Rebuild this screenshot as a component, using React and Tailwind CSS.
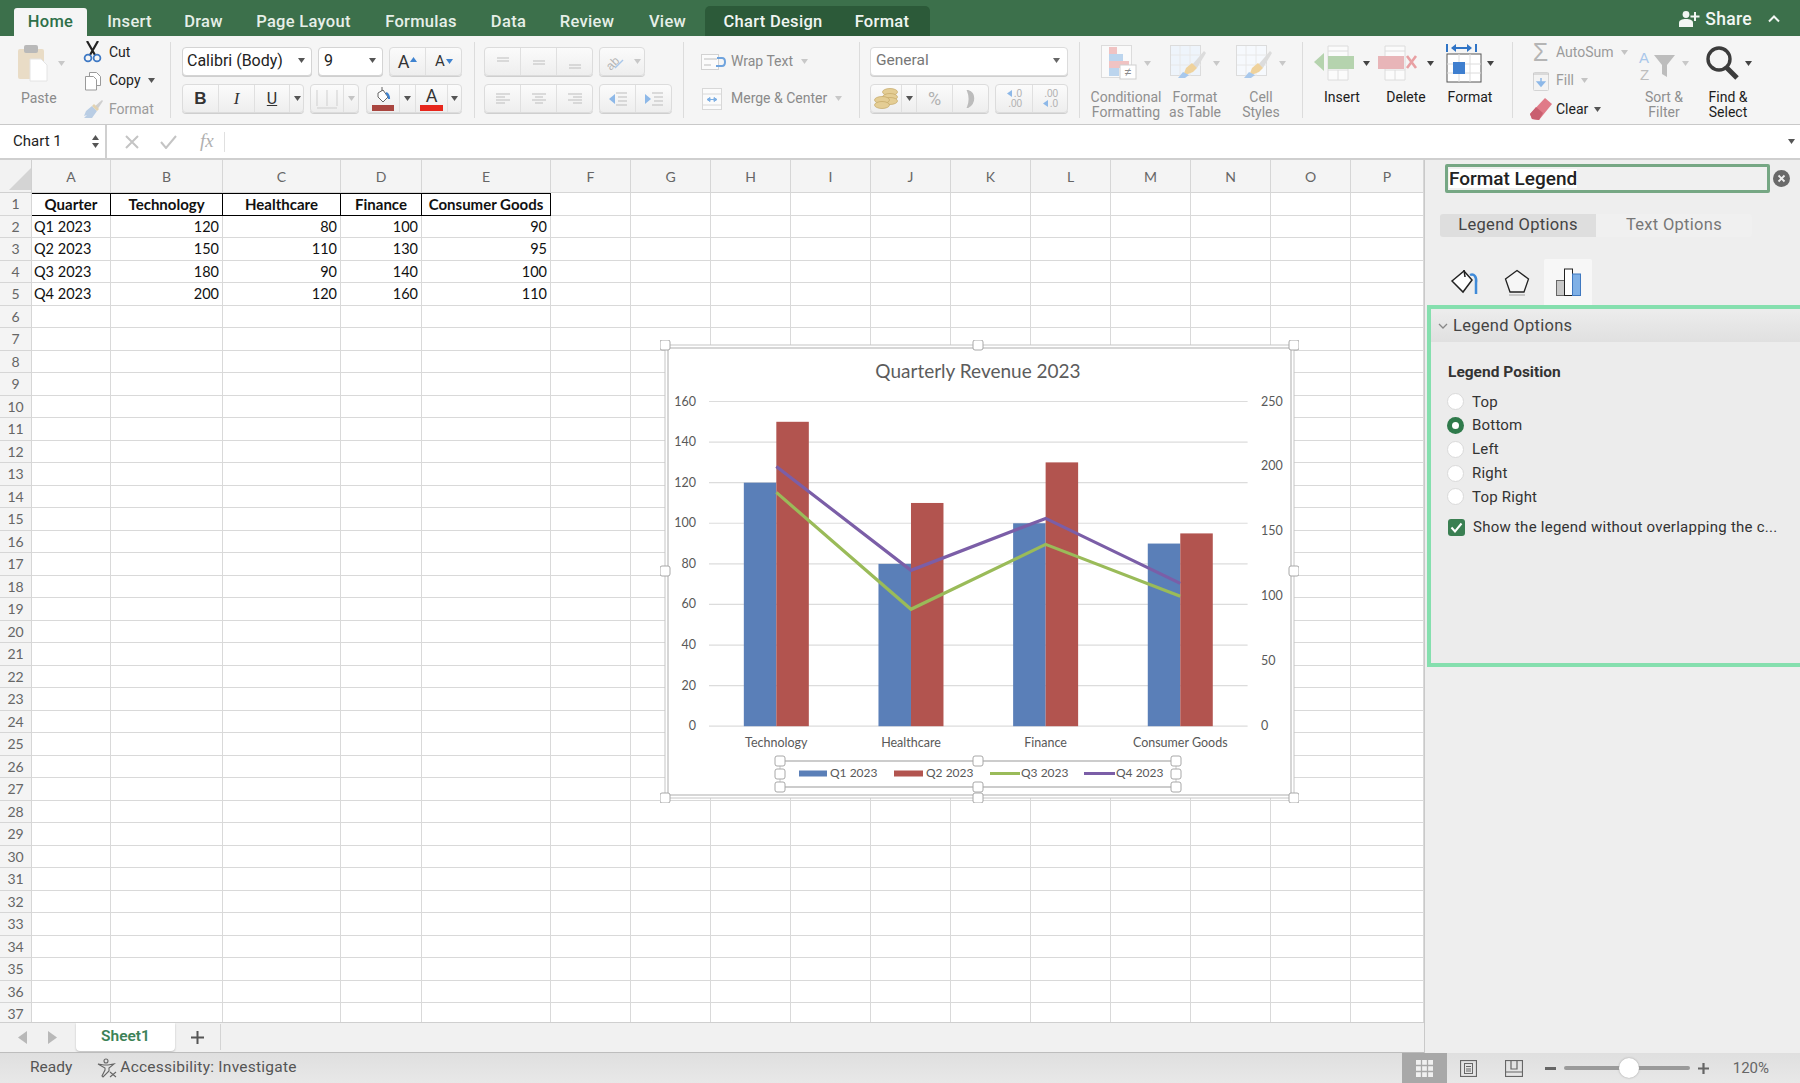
import React from "react";

const Caret = ({ c = "#666", className = "" }) => (
  <svg width="7" height="5" viewBox="0 0 7 5" className={className}><path d="M0 0h7L3.500 5z" fill={c} /></svg>
);

const Seg = ({ w, children }) => (
  <div style={{ width: w }} className="flex items-stretch h-[29px] rounded-[4px] border border-[#dcdcdc] bg-linear-to-b from-[#fbfbfb] to-[#eeeeee] shadow-[0_1px_0_#cfcfcf] overflow-hidden">
    {children}
  </div>
);
const Cell = ({ w, last, children }) => (
  <div style={{ width: w }} className={"flex items-center justify-center shrink-0 " + (last ? "" : "border-r border-[#e0e0e0]")}>{children}</div>
);
const Sep = () => <div className="w-px h-[76px] bg-[#dcdcdc] shrink-0" />;

const PasteIcon = () => (
  <svg width="30" height="37" viewBox="0 0 30 37">
    <rect x="0" y="4" width="26" height="30" rx="2" fill="#e9dcc6" />
    <rect x="6" y="0" width="14" height="8" rx="2" fill="#b9b9b9" />
    <path d="M12 14h11l6 6v16H12z" fill="#fff" stroke="#e4e4e4" />
  </svg>
);
const ScissorsIcon = () => (
  <svg width="20" height="22" viewBox="0 0 20 22">
    <path d="M4 0l8 14M15 0L7 14" stroke="#222" strokeWidth="2.200" />
    <circle cx="5" cy="17" r="3.400" fill="none" stroke="#3d78c4" strokeWidth="1.800" />
    <circle cx="14" cy="17" r="3.400" fill="none" stroke="#3d78c4" strokeWidth="1.800" />
  </svg>
);
const CopyIcon = () => (
  <svg width="18" height="20" viewBox="0 0 18 20" fill="#fff" stroke="#9a9a9a">
    <path d="M5.500 1.500h7l4 4v9h-11z" />
    <path d="M1.500 5.500h8l3 3v10.500h-11z" />
  </svg>
);
const BrushIcon = ({ w = 22, h = 20 }) => (
  <svg width={w} height={h} viewBox="0 0 22 20">
    <path d="M12 8L20 1l1 1-6 9z" fill="#cfcfcf" />
    <path d="M4 12l6-5 5 5-5 7H2l3-3-3 1z" fill="#b9cde4" />
    <path d="M10 7l5 5 2-2-5-5z" fill="#e2d2b0" />
  </svg>
);

const CondIcon = () => (
  <svg width="38" height="36" viewBox="0 0 38 36">
    <rect x="0.500" y="0.500" width="30" height="32" fill="#fafafa" stroke="#dcdcdc" />
    <rect x="8" y="2" width="8" height="7" fill="#f0c3c3" />
    <rect x="8" y="9" width="14" height="7" fill="#bcd5ee" />
    <rect x="8" y="16" width="20" height="7" fill="#f0c3c3" />
    <rect x="8" y="23" width="10" height="8" fill="#bcd5ee" />
    <rect x="19" y="20" width="16" height="14" fill="#fff" stroke="#cfcfcf" />
    <text x="27" y="31" textAnchor="middle" fontSize="12" fill="#8a8a8a" fontFamily="Liberation Sans, sans-serif">≠</text>
  </svg>
);
const TableIcon = ({ fill = "#eef4fb" }) => (
  <svg width="38" height="36" viewBox="0 0 38 36">
    <rect x="0.500" y="0.500" width="30" height="30" fill={fill} stroke="#dcdcdc" />
    <path d="M10 1v30M20 1v30M1 10h30M1 20h30" stroke="#e8e8e8" />
    <path d="M22 20L34 6l2 2-9 15z" fill="#dcdcdc" />
    <path d="M16 23l6-5 5 5-4 4-10 4z" fill="#efd29c" />
    <path d="M13 27l6 3-4 3H8z" fill="#a8c8ec" />
  </svg>
);
const InsertIcon = () => (
  <svg width="44" height="36" viewBox="0 0 44 36">
    <path d="M14 1h20v34H14z" fill="#fbfbfb" stroke="#dcdcdc" />
    <path d="M14 25h20M24 25v10M14 6h20" stroke="#dcdcdc" />
    <rect x="14" y="11" width="26" height="13" fill="#b5d3ae" />
    <path d="M0 17l10-9v18z" fill="#b5d3ae" />
  </svg>
);
const DeleteIcon = () => (
  <svg width="44" height="36" viewBox="0 0 44 36">
    <path d="M7 1h20v34H7z" fill="#fbfbfb" stroke="#dcdcdc" />
    <path d="M7 25h20M17 25v10M7 6h20" stroke="#dcdcdc" />
    <rect x="0" y="11" width="26" height="13" fill="#e8b5b8" />
    <path d="M29 11l9 12M38 11l-9 12" stroke="#e8a0a3" strokeWidth="2.600" />
  </svg>
);
const FormatIcon = () => (
  <svg width="36" height="40" viewBox="0 0 36 40">
    <path d="M1 1v8M30 1v8" stroke="#2f74c6" strokeWidth="2" />
    <path d="M6 5h19" stroke="#2f74c6" strokeWidth="2" />
    <path d="M10 1L5 5l5 4zM21 1l5 4-5 4z" fill="#2f74c6" />
    <rect x="1" y="11" width="34" height="28" fill="#fff" stroke="#555" />
    <path d="M13 11v28M24 11v28M1 21h34M1 30h34" stroke="#dcdcdc" />
    <rect x="7" y="19" width="12" height="12" fill="#3f7fcf" />
  </svg>
);
const SortIcon = () => (
  <svg width="38" height="36" viewBox="0 0 38 36" fontFamily="Liberation Sans, sans-serif" overflow="visible">
    <text x="0" y="18" fontSize="15" fill="#a9c7ea">A</text>
    <text x="1" y="35" fontSize="15" fill="#bdbdbd">Z</text>
    <path d="M15 10h21l-8 10v12l-5-3V20z" fill="#bdbdbd" />
  </svg>
);
const SearchIcon = () => (
  <svg width="35" height="37" viewBox="0 0 35 37" fill="none" stroke="#3c3c3c">
    <circle cx="14" cy="14" r="11" strokeWidth="3.400" />
    <path d="M22 23l10 10" strokeWidth="5" />
  </svg>
);
const EraserIcon = () => (
  <svg width="22" height="24" viewBox="0 0 22 24">
    <path d="M15 1l7 6L9 23l-7-1-2-5z" fill="#e07a88" />
    <path d="M6 10l7 6-4 7-7-1-2-5z" fill="#c95f70" />
  </svg>
);
const SmallAlign = ({ d, c = "#bdbdbd", w = 18, h = 16 }) => (
  <svg width={w} height={h} viewBox="0 0 18 16"><path d={d} stroke={c} strokeWidth="1.200" fill="none" /></svg>
);
const IndentIcon = ({ right }) => (
  <svg width="20" height="16" viewBox="0 0 20 16">
    <path d={right ? "M1 3l6 5-6 5z" : "M7 3L1 8l6 5z"} fill="#8db8e8" />
    <path d="M8 2h11M10 6h9M10 10h9M8 14h11" stroke="#bdbdbd" />
  </svg>
);

const Small = ({ icon, label, faded, arrow, w = 90, gap = "ml-[4px]" }) => (
  <div style={{ width: w }} className="flex items-center h-[20px]">
    <div className="w-[25px] flex justify-center shrink-0">{icon}</div>
    <span className={gap + " text-[14px] " + (faded ? "text-[#9b9b9b]" : "text-[#222]")}>{label}</span>
    {arrow && <Caret c={faded ? "#c4c4c4" : "#555"} className="ml-[7px]" />}
  </div>
);

const Tall = ({ w, icon, label, faded, arrow, className = "" }) => (
  <div style={{ width: w }} className={"flex flex-col items-center shrink-0 " + className}>
    <div className="flex items-center gap-[5px] h-[42px] pt-[0px]">
      {icon}
      {arrow && <Caret c={faded ? "#c8c8c8" : "#444"} />}
    </div>
    <div className={"text-center text-[14px] leading-[15px] mt-[6px] whitespace-pre " + (faded ? "text-[#8f8f8f]" : "text-[#1c1c1c]")}>{label}</div>
  </div>
);

const TABS = [
  ["Home", "w-[73px] ml-[14px]"], ["Insert", "w-[85px]"], ["Draw", "w-[63px]"], ["Page Layout", "w-[130px] ml-[3.500px]"],
  ["Formulas", "w-[105px]"], ["Data", "w-[68px] ml-[1px]"], ["Review", "w-[89px]"], ["View", "w-[72px]"],
];

const TopBar = () => (
  <div className="h-[36px] bg-[#3c704b] flex items-end shrink-0 text-[16.500px] tracking-[0.3px] font-medium">
    {TABS.map(([t, c], i) => (
      <div key={t} className={c + " h-[28px] flex items-center justify-center rounded-t-[3px] " + (i === 0 ? "bg-[#f5f5f5] text-[#2e7049]" : "text-[#e6efe8]")}>{t}</div>
    ))}
    <div className="ml-[1.500px] w-[225px] h-[30px] bg-[#2c5a39] rounded-t-[5px] flex items-center text-[#f0f5f1] pt-[2px]">
      <span className="w-[136px] text-center">Chart Design</span>
      <span className="w-[82px] text-center">Format</span>
    </div>
    <div className="ml-auto h-[36px] flex items-center text-[#f2f6f3] pr-[20px] pt-[2px]">
      <svg width="22" height="18" viewBox="0 0 22 18" fill="#f2f6f3">
        <circle cx="7" cy="4.500" r="3.400" />
        <path d="M0 17v-4c0-3 3-4 7-4s7 1 7 4v4z" />
        <path d="M16 5v9M11.500 9.500h9" stroke="#f2f6f3" strokeWidth="2" transform="translate(0 -3)" />
      </svg>
      <span className="ml-[4px] text-[17.500px]">Share</span>
      <svg width="12" height="8" viewBox="0 0 12 8" className="ml-[16px]"><path d="M1 6.500l5-5 5 5" stroke="#f2f6f3" strokeWidth="2" fill="none" /></svg>
    </div>
  </div>
);

const Ribbon = () => (
  <div className="h-[89px] shrink-0 bg-[#f5f5f5] border-b border-[#c9c9c9] pt-[6px] flex items-start">
    {/* Clipboard */}
    <div className="w-[170px] flex shrink-0">
      <div className="w-[82px] pl-[18px] pt-[3px]">
        <div className="flex items-center gap-[10px]"><PasteIcon /><Caret c="#c8c8c8" /></div>
        <div className="text-[14px] text-[#8a8a8a] mt-[9px] ml-[3px] leading-[15px]">Paste</div>
      </div>
      <div className="flex flex-col gap-[8.500px] ml-[-1px]">
        <Small icon={<ScissorsIcon />} label="Cut" />
        <Small icon={<CopyIcon />} label="Copy" arrow />
        <Small icon={<BrushIcon />} label="Format" faded />
      </div>
    </div>
    <Sep />
    {/* Font */}
    <div className="w-[303px] shrink-0 pl-[11px] pt-[5px] flex flex-col gap-[8px]">
      <div className="flex gap-[6px]">
        <div className="w-[130px] h-[29px] bg-white rounded-[4px] border border-[#d4d4d4] shadow-[0_1px_0_#cfcfcf] flex items-center pl-[4px] pr-[6px] pb-[2px] text-[16px] text-[#222]">
          <span>Calibri (Body)</span><Caret c="#555" className="ml-auto" />
        </div>
        <div className="w-[65px] h-[29px] bg-white rounded-[4px] border border-[#d4d4d4] shadow-[0_1px_0_#cfcfcf] flex items-center pl-[5px] pr-[6px] pb-[2px] text-[16px] text-[#222]">
          <span>9</span><Caret c="#555" className="ml-auto" />
        </div>
        <Seg w={73}>
          <Cell w={36}><span className="text-[18px] text-[#333]">A</span><Caret c="#3f83d0" className="rotate-180 mb-[5px] ml-[1px]" /></Cell>
          <Cell w={36} last><span className="text-[15px] text-[#333]">A</span><Caret c="#3f83d0" className="ml-[1px]" /></Cell>
        </Seg>
      </div>
      <div className="flex">
        <Seg w={122}>
          <Cell w={36}><span className="font-bold text-[17px] text-[#333] font-['Liberation_Sans',sans-serif]">B</span></Cell>
          <Cell w={36}><span className="italic text-[17px] text-[#333] font-['Liberation_Serif',serif]">I</span></Cell>
          <Cell w={35}><span className="underline text-[16px] text-[#333]">U</span></Cell>
          <Cell w={15} last><Caret c="#555" /></Cell>
        </Seg>
        <div className="ml-[6px]">
          <Seg w={49}>
            <Cell w={33}><svg width="22" height="22" viewBox="0 0 22 22"><path d="M1 2v16M21 2v16M11 2v16M1 20h20" stroke="#cfcfcf" /></svg></Cell>
            <Cell w={14} last><Caret c="#c4c4c4" /></Cell>
          </Seg>
        </div>
        <div className="ml-[7px]">
          <Seg w={96}>
            <Cell w={33}>
              <svg width="24" height="25" viewBox="0 0 24 25">
                <path d="M11 1v4M7 7l5-3 5 7-5 5-5-5z" fill="#fff" stroke="#666" />
                <path d="M15 7c2 1 3 3 3 6" stroke="#3f83d0" strokeWidth="2.200" fill="none" />
                <rect x="1" y="19" width="22" height="6" fill="#a9453f" />
              </svg>
            </Cell>
            <Cell w={16}><Caret c="#555" /></Cell>
            <Cell w={32}>
              <div className="flex flex-col items-center">
                <span className="text-[18px] leading-[19px] text-[#333]">A</span>
                <div className="w-[23px] h-[6px] bg-[#e7261c]" />
              </div>
            </Cell>
            <Cell w={13} last><Caret c="#555" /></Cell>
          </Seg>
        </div>
      </div>
    </div>
    <Sep />
    {/* Alignment */}
    <div className="w-[208px] shrink-0 pl-[9px] pt-[5px] flex flex-col gap-[8px]">
      <div className="flex gap-[6px]">
        <Seg w={109}>
          <Cell w={36}><SmallAlign d="M3 4h12M3 7h12" /></Cell>
          <Cell w={36}><SmallAlign d="M3 7h12M3 10h12" /></Cell>
          <Cell w={35} last><SmallAlign d="M3 11h12M3 14h12" /></Cell>
        </Seg>
        <Seg w={46}>
          <Cell w={30} last>
            <svg width="22" height="20" viewBox="0 0 22 20" fontFamily="Liberation Sans, sans-serif">
              <text x="8" y="14" fontSize="12" fill="#b5b5b5" transform="rotate(-45 10 10)" textAnchor="middle">ab</text>
              <path d="M11 16l8-8" stroke="#a9c7ea" strokeWidth="1.500" />
            </svg>
          </Cell>
          <Cell w={14} last><Caret c="#c8c8c8" /></Cell>
        </Seg>
      </div>
      <div className="flex gap-[6px]">
        <Seg w={109}>
          <Cell w={36}><SmallAlign d="M2 3h14M2 6h9M2 9h14M2 12h9" /></Cell>
          <Cell w={36}><SmallAlign d="M2 3h14M5 6h8M2 9h14M5 12h8" /></Cell>
          <Cell w={35} last><SmallAlign d="M2 3h14M7 6h9M2 9h14M7 12h9" /></Cell>
        </Seg>
        <Seg w={73}>
          <Cell w={36}><IndentIcon /></Cell>
          <Cell w={35} last><IndentIcon right /></Cell>
        </Seg>
      </div>
    </div>
    <Sep />
    {/* Wrap */}
    <div className="w-[175px] shrink-0 pl-[17px] pt-[5px] flex flex-col gap-[8px] text-[14px] text-[#8a8a8a]">
      <div className="h-[29px] flex items-center">
        <svg width="26" height="18" viewBox="0 0 26 18" fill="none">
          <rect x="0.500" y="1.500" width="17" height="15" stroke="#d2d2d2" fill="#fbfbfb" />
          <path d="M3 6h13M3 12h7" stroke="#bdbdbd" />
          <path d="M16 5h5c4 0 4 8 0 8h-6" stroke="#6fa3dd" strokeWidth="2" />
        </svg>
        <span className="ml-[4px]">Wrap Text</span><Caret c="#c8c8c8" className="ml-[8px]" />
      </div>
      <div className="h-[29px] flex items-center">
        <svg width="24" height="24" viewBox="0 0 24 24">
          <rect x="1.500" y="1.500" width="19" height="21" fill="#fbfbfb" stroke="#d8d8d8" />
          <path d="M1 7h20M1 18h20" stroke="#d8d8d8" />
          <path d="M6 12.500h10M6 12.500l3-2v4zM16 12.500l-3-2v4z" stroke="#7fb0e4" fill="#7fb0e4" />
        </svg>
        <span className="ml-[6px]">Merge &amp; Center</span><Caret c="#c8c8c8" className="ml-[8px]" />
      </div>
    </div>
    <Sep />
    {/* Number */}
    <div className="w-[219px] shrink-0 pl-[10px] pt-[5px] flex flex-col gap-[8px]">
      <div className="w-[198px] h-[29px] bg-white rounded-[4px] border border-[#dcdcdc] shadow-[0_1px_0_#cfcfcf] flex items-center pl-[5px] pr-[7px] pb-[2px] text-[15.500px] text-[#777]">
        <span>General</span><Caret c="#666" className="ml-auto" />
      </div>
      <div className="flex gap-[6px]">
        <Seg w={119}>
          <Cell w={31}>
            <svg width="26" height="24" viewBox="0 0 26 24" fill="#e4cd94" stroke="#c4a866" strokeWidth="0.700">
              <ellipse cx="17" cy="5" rx="7.500" ry="3.500" /><ellipse cx="17" cy="10" rx="7.500" ry="3.500" /><ellipse cx="17" cy="14" rx="7.500" ry="3.500" />
              <ellipse cx="9" cy="13" rx="7.500" ry="3.500" /><ellipse cx="9" cy="18" rx="7.500" ry="3.500" />
            </svg>
          </Cell>
          <Cell w={15}><Caret c="#555" /></Cell>
          <Cell w={36}><span className="text-[18px] text-[#b0b0b0]">%</span></Cell>
          <Cell w={35} last>
            <svg width="12" height="18" viewBox="0 0 12 18"><path d="M3 1c7 2 7 12 0 16 2-5 2-11 0-16z" fill="#bcbcbc" stroke="#bcbcbc" strokeWidth="2" /></svg>
          </Cell>
        </Seg>
        <Seg w={73}>
          <Cell w={37}>
            <div className="flex flex-col items-end text-[10px] leading-[10px] text-[#b0b0b0] font-['Liberation_Sans',sans-serif]">
              <div className="flex items-center"><Caret c="#8db8e8" className="rotate-90 mr-[1px]" /><span>.0</span></div><span>.00</span>
            </div>
          </Cell>
          <Cell w={34} last>
            <div className="flex flex-col items-end text-[10px] leading-[10px] text-[#b0b0b0] font-['Liberation_Sans',sans-serif]">
              <span>.00</span><div className="flex items-center"><Caret c="#8db8e8" className="rotate-90 mr-[1px]" /><span>.0</span></div>
            </div>
          </Cell>
        </Seg>
      </div>
    </div>
    <Sep />
    {/* Styles */}
    <div className="w-[222px] shrink-0 pl-[6px] flex">
      <Tall w={80} icon={<CondIcon />} label={"Conditional\nFormatting"} faded arrow />
      <Tall w={58} icon={<TableIcon />} label={"Format\nas Table"} faded arrow />
      <Tall w={66} className="ml-[4px]" icon={<TableIcon fill="#f6f9fd" />} label={"Cell\nStyles"} faded arrow />
    </div>
    <Sep />
    {/* Cells */}
    <div className="w-[209px] shrink-0 pl-[7px] flex">
      <Tall w={64} icon={<InsertIcon />} label="Insert" arrow />
      <Tall w={64} icon={<DeleteIcon />} label="Delete" arrow />
      <Tall w={64} icon={<FormatIcon />} label="Format" arrow />
    </div>
    <Sep />
    {/* Editing */}
    <div className="flex-1 pl-[15px] flex">
      <div className="w-[104px] shrink-0 flex flex-col gap-[8.500px]">
        <Small w={104} faded arrow gap="ml-[3px]" label="AutoSum" icon={<span className="text-[25px] leading-[20px] text-[#b5b5b5] font-['Liberation_Sans',sans-serif]">Σ</span>} />
        <Small w={104} faded arrow gap="ml-[3px]" label="Fill" icon={
          <svg width="16" height="20" viewBox="0 0 16 20"><rect x="0.500" y="1.500" width="15" height="18" rx="1" fill="#f3f3f3" stroke="#d4d4d4" /><path d="M0 3h16" stroke="#c0c0c0" /><path d="M8 7v6M4.500 11l3.500 4 3.500-4z" stroke="#8db8e8" fill="#8db8e8" strokeWidth="1.500" /></svg>
        } />
        <div className="flex items-center h-[20px] w-[104px]">
          <div className="w-[25px] flex justify-center shrink-0"><EraserIcon /></div>
          <span className="ml-[3px] text-[14px] text-[#222]">Clear</span><Caret c="#555" className="ml-[6px]" />
        </div>
      </div>
      <Tall w={64} icon={<SortIcon />} label={"Sort &\nFilter"} faded arrow />
      <Tall w={64} icon={<SearchIcon />} label={"Find &\nSelect"} arrow />
    </div>
  </div>
);

const FormulaBar = () => (
  <div className="h-[35px] shrink-0 bg-white border-b-2 border-[#cfcfcf] flex items-center">
    <div className="w-[107px] h-full bg-white border-r-2 border-[#d0d0d0] flex items-center pl-[13px] pr-[6px] text-[15px] text-[#222]">
      <span>Chart 1</span>
      <div className="ml-auto flex flex-col gap-[3px]"><Caret c="#555" className="rotate-180" /><Caret c="#555" /></div>
    </div>
    <svg width="14" height="14" viewBox="0 0 14 14" className="ml-[18px]"><path d="M1 1l12 12M13 1L1 13" stroke="#c4c4c4" strokeWidth="2" /></svg>
    <svg width="17" height="14" viewBox="0 0 17 14" className="ml-[21px]"><path d="M1 7l5 6L16 1" stroke="#c4c4c4" strokeWidth="2" fill="none" /></svg>
    <span className="ml-[23px] italic text-[19px] text-[#b0b0b0] font-['Liberation_Serif',serif]">fx</span>
    <div className="w-px h-[20px] bg-[#e0e0e0] ml-[10px]" />
    <Caret c="#555" className="ml-auto mr-[5px]" />
  </div>
);

const COLS = ["A", "B", "C", "D", "E", "F", "G", "H", "I", "J", "K", "L", "M", "N", "O", "P"];
const DATA = [
  ["Quarter", "Technology", "Healthcare", "Finance", "Consumer Goods"],
  ["Q1 2023", 120, 80, 100, 90],
  ["Q2 2023", 150, 110, 130, 95],
  ["Q3 2023", 180, 90, 140, 100],
  ["Q4 2023", 200, 120, 160, 110],
];
const ROWS = Array.from({ length: 37 }, (_, i) => i + 1);

const Sheet = () => (
  <div className="grid grid-cols-[32px_79px_112px_118px_81px_129px_repeat(10,80px)_73px] grid-rows-[33px_repeat(37,22.500px)] bg-white font-['Lato',sans-serif] text-[14.500px] text-[#111]">
    <div className="bg-[#f2f2f2] border-r border-b border-[#d0d0d0] flex items-end justify-end">
      <svg width="22" height="24" viewBox="0 0 22 24"><path d="M22 0v22H0z" fill="#d4d4d4" /></svg>
    </div>
    {COLS.map((c) => (
      <div key={c} className="bg-[#f4f4f4] border-r border-b border-[#d6d6d6] flex items-center justify-center text-[#666] text-[14px]">{c}</div>
    ))}
    {ROWS.map((r) => (
      <React.Fragment key={r}>
        <div className="bg-[#f4f4f4] border-r border-b border-[#d6d6d6] flex items-center justify-center text-[#666] text-[14px] leading-none pt-[1px]">{r}</div>
        {COLS.map((c, ci) => {
          const v = r <= 5 && ci < 5 ? DATA[r - 1][ci] : null;
          if (r === 1 && ci < 5) {
            return <div key={c} className="border-r border-b border-t border-black flex items-center justify-center font-bold text-[15px] whitespace-nowrap leading-none pt-[1px]">{v}</div>;
          }
          return (
            <div key={c} className={"border-r border-b border-[#d9d9d9] flex items-center leading-none whitespace-nowrap pt-[1px] " + (typeof v === "number" ? "justify-end pr-[3px]" : "pl-[2px]")}>{v}</div>
          );
        })}
      </React.Fragment>
    ))}
  </div>
);

/* Chart: drawing coordinates relative to the selection frame (629 × 453) */
const PW = 538.6, PX = 44, Y0 = 381.2, PH = 324.7;
const cats = ["Technology", "Healthcare", "Finance", "Consumer Goods"];
const q1 = [120, 80, 100, 90], q2 = [150, 110, 130, 95], q3 = [180, 90, 140, 100], q4 = [200, 120, 160, 110];
const cx = (i) => PX + PW / 4 * (i + 0.5);
const yP = (v) => Y0 - (v * PH) / 160;
const yS = (v) => Y0 - (v * PH) / 250;
const line = (a) => a.map((v, i) => `${cx(i)},${yS(v)}`).join(" ");

const Handle = ({ x, y, s = 10 }) => (
  <rect x={x - s / 2} y={y - s / 2} width={s} height={s} rx="2" fill="#fff" stroke="#a8a8a8" strokeWidth="1" />
);

const Chart = () => (
  <div className="absolute left-[660px] top-[180px] w-[639px] h-[463px]">
    <svg width="639" height="463" viewBox="-5 -5 639 463" fontFamily="Lato, sans-serif">
      <rect x="0" y="0" width="629" height="453" fill="#fff" stroke="#c6c6c6" strokeWidth="1" />
      <rect x="3" y="3" width="623" height="447" fill="#fff" stroke="#c9c9c9" strokeWidth="1.500" />
      <text x="313" y="33" textAnchor="middle" fontSize="19" fill="#5c5c5c">Quarterly Revenue 2023</text>
      {[0, 20, 40, 60, 80, 100, 120, 140, 160].map((v) => (
        <g key={v}>
          <path d={`M${PX} ${yP(v)}H${PX + PW}`} stroke="#dcdcdc" strokeWidth="1.200" />
          <text x="31" y={yP(v) + 4} textAnchor="end" fontSize="12.500" fill="#595959">{v}</text>
        </g>
      ))}
      {[0, 50, 100, 150, 200, 250].map((v) => (
        <text key={v} x="596" y={yS(v) + 4} fontSize="12.500" fill="#595959">{v}</text>
      ))}
      {cats.map((c, i) => (
        <g key={c}>
          <rect x={cx(i) - 32.500} y={yP(q1[i])} width="32.500" height={(q1[i] * PH) / 160} fill="#5a7fb8" />
          <rect x={cx(i)} y={yP(q2[i])} width="32.500" height={(q2[i] * PH) / 160} fill="#b2544f" />
          <text x={cx(i)} y="402" textAnchor="middle" fontSize="12.500" fill="#595959">{c}</text>
        </g>
      ))}
      <polyline points={line(q3)} fill="none" stroke="#9abb59" strokeWidth="3.200" />
      <polyline points={line(q4)} fill="none" stroke="#7b5ea7" strokeWidth="3.200" />
      {/* Legend selection */}
      <path d="M115 416H511M115 442H511" stroke="#9a9a9a" strokeWidth="1.200" />
      <path d="M115 416V442M511 416V442" stroke="#c8c8c8" strokeWidth="1" />
      {[115, 313, 511].map((x) => <Handle key={x} x={x} y={416} />)}
      {[115, 511].map((x) => <Handle key={x} x={x} y={429} />)}
      {[115, 313, 511].map((x) => <Handle key={x} x={x} y={442} />)}
      <rect x="134" y="425.500" width="28" height="6" fill="#5a7fb8" />
      <text x="165" y="432" fontSize="12" fill="#595959">Q1 2023</text>
      <rect x="229" y="425.500" width="29" height="6" fill="#b2544f" />
      <text x="261" y="432" fontSize="12" fill="#595959">Q2 2023</text>
      <path d="M325 428.500H355" stroke="#9abb59" strokeWidth="3" />
      <text x="356" y="432" fontSize="12" fill="#595959">Q3 2023</text>
      <path d="M419 428.500H450" stroke="#7b5ea7" strokeWidth="3" />
      <text x="451" y="432" fontSize="12" fill="#595959">Q4 2023</text>
      {/* Chart selection handles */}
      {[[0, 0], [313, 0], [629, 0], [0, 226], [629, 226], [0, 453], [313, 453], [629, 453]].map(([x, y]) => (
        <Handle key={x + "-" + y} x={x} y={y} />
      ))}
    </svg>
  </div>
);

const TabBar = () => (
  <div className="h-[31px] shrink-0 bg-[#f1f1f1] border-t border-[#cfcfcf] border-b border-b-[#bdbdbd] flex items-start">
    <div className="w-[76px] h-full flex items-center pl-[18px] gap-[19px] shrink-0">
      <svg width="10" height="13" viewBox="0 0 10 13"><path d="M9 0v13L0 6.500z" fill="#b8b8b8" /></svg>
      <svg width="10" height="13" viewBox="0 0 10 13"><path d="M1 0v13l9-6.500z" fill="#b8b8b8" /></svg>
    </div>
    <div className="w-[99px] h-[28px] bg-white rounded-b-[4px] shadow-[0_1px_2px_#bbbbbb] flex items-center justify-center font-semibold text-[15.500px] text-[#3c8257] shrink-0">Sheet1</div>
    <div className="w-[46px] h-[26px] mt-[1px] border-r border-[#d4d4d4] flex items-center justify-center shrink-0">
      <svg width="13" height="13" viewBox="0 0 13 13"><path d="M6.500 0v13M0 6.500h13" stroke="#555" strokeWidth="2" /></svg>
    </div>
  </div>
);

const Radio = ({ label, on }) => (
  <div className="h-[23.750px] flex items-center -ml-[1px]">
    {on ? (
      <div className="w-[17px] h-[17px] rounded-full bg-[#2f7a4b] flex items-center justify-center shrink-0"><div className="w-[7px] h-[7px] rounded-full bg-white" /></div>
    ) : (
      <div className="w-[17px] h-[17px] rounded-full bg-white border border-[#dadada] shrink-0" />
    )}
    <span className="ml-[8px] text-[15px] text-[#333] tracking-[0.2px]">{label}</span>
  </div>
);

const Panel = () => (
  <div className="w-[376px] shrink-0 bg-[#eeeeee] border-l border-[#c9c9c9] flex flex-col">
    <div className="pl-[20px] pt-[4px] flex items-center">
      <div className="w-[325px] h-[29px] border-[3px] border-[#76a784] rounded-[2px] bg-[#f0f0f0] flex items-center pl-[1px] text-[19px] font-medium text-[#222] leading-none">
        <span className="bg-white">Format Legend</span>
      </div>
      <svg width="17" height="17" viewBox="0 0 17 17" className="ml-[3px]">
        <circle cx="8.500" cy="8.500" r="8.500" fill="#6a6a6a" />
        <path d="M5.500 5.500l6 6M11.500 5.500l-6 6" stroke="#eee" strokeWidth="1.800" />
      </svg>
    </div>
    <div className="ml-[15px] mt-[21px] w-[312px] h-[23px] flex text-[16.500px] tracking-[0.3px] rounded-[3px] overflow-hidden">
      <div className="w-[156px] bg-[#dedede] flex items-center justify-center text-[#444]">Legend Options</div>
      <div className="w-[156px] bg-[#f0f0f0] flex items-center justify-center text-[#777]">Text Options</div>
    </div>
    <div className="flex ml-[26px] mt-[22px] h-[46px] items-center">
      <svg width="28" height="26" viewBox="0 0 28 26" fill="none">
        <path d="M1 12L13 2l8 9-9 12z" fill="#fff" stroke="#222" strokeWidth="1.500" />
        <path d="M13 1l1 7" stroke="#222" strokeWidth="1.500" />
        <path d="M19 6c4-2 7 2 6 8v11" stroke="#3f8ad8" strokeWidth="2.500" />
      </svg>
      <svg width="26" height="27" viewBox="0 0 26 27" fill="none" className="ml-[25px]">
        <path d="M13 1.500L24.500 10l-4.500 13H6L1.500 10z" stroke="#222" strokeWidth="1.300" fill="#f6f6f6" />
        <path d="M5 26h16" stroke="#bbb" strokeWidth="1.500" />
      </svg>
      <div className="ml-[14px] w-[48px] h-[46px] bg-[#f7f7f7] rounded-t-[2px] flex items-center justify-center">
        <svg width="25" height="28" viewBox="0 0 25 28">
          <rect x="0.500" y="12.500" width="8" height="15" fill="#c8c8c8" stroke="#666" />
          <rect x="8.500" y="1" width="8" height="26.500" fill="#fff" stroke="#222" />
          <rect x="16.500" y="6" width="8" height="21.500" fill="#7fb0e6" stroke="#3f78c0" />
        </svg>
      </div>
    </div>
    <div className="ml-[2px] h-[362px] border-[4px] border-r-0 border-[#85dfae] bg-[#ececec] flex flex-col">
      <div className="mt-[2px] h-[31px] bg-linear-to-b from-[#ececec] to-[#e0e0e0] flex items-center pl-[7px] text-[16.500px] tracking-[0.3px] text-[#444]">
        <svg width="10" height="7" viewBox="0 0 10 7"><path d="M1 1l4 4 4-4" stroke="#888" strokeWidth="1.300" fill="none" /></svg>
        <span className="ml-[5px]">Legend Options</span>
      </div>
      <div className="pl-[17px] pt-[21px]">
        <div className="text-[15.500px] font-bold text-[#333] leading-[18px]">Legend Position</div>
        <div className="mt-[9px] flex flex-col">
          <Radio label="Top" />
          <Radio label="Bottom" on />
          <Radio label="Left" />
          <Radio label="Right" />
          <Radio label="Top Right" />
        </div>
        <div className="mt-[7px] flex items-center">
          <div className="w-[17px] h-[17px] rounded-[3px] bg-[#3a7f52] flex items-center justify-center shrink-0">
            <svg width="13" height="11" viewBox="0 0 13 11"><path d="M1.500 5.500l3.500 4 6.500-8" stroke="#fff" strokeWidth="2" fill="none" /></svg>
          </div>
          <span className="ml-[8px] text-[15px] text-[#333] tracking-[0.25px] whitespace-nowrap">Show the legend without overlapping the c...</span>
        </div>
      </div>
    </div>
  </div>
);

const StatusBar = () => (
  <div className="h-[30px] shrink-0 bg-linear-to-b from-[#dfdfdf] to-[#e8e8e8] flex items-center text-[15px] text-[#555]">
    <span className="ml-[30px] text-[15.500px]">Ready</span>
    <svg width="20" height="20" viewBox="0 0 20 20" fill="none" stroke="#666" strokeWidth="1.100" className="ml-[25px]">
      <circle cx="9" cy="3" r="2" />
      <path d="M1 6l6 1h4l6-1-5 4v3l-6 6-1-1 3-6V10z" />
      <path d="M13 14l6 5M19 14l-6 5" />
    </svg>
    <span className="ml-[3px] text-[15.500px] tracking-[0.25px]">Accessibility: Investigate</span>
    <div className="ml-auto h-full flex items-center">
      <div className="w-[45px] h-full bg-[#a8a8a8] flex items-center justify-center">
        <svg width="17" height="17" viewBox="0 0 17 17"><path d="M0 0h17v17H0z" fill="#f0f0f0" /><path d="M5.500 0v17M11.500 0v17M0 5.500h17M0 11.500h17" stroke="#a8a8a8" strokeWidth="1.300" /></svg>
      </div>
      <div className="w-[44px] flex justify-center">
        <svg width="17" height="17" viewBox="0 0 17 17" fill="none" stroke="#666"><rect x="0.500" y="0.500" width="16" height="16" strokeWidth="1.200" /><rect x="4.500" y="3.500" width="8" height="10" /><path d="M6 6.500h5M6 9h5M6 11h5" /></svg>
      </div>
      <div className="w-[46px] flex justify-center">
        <svg width="18" height="17" viewBox="0 0 18 17" fill="none" stroke="#666" strokeWidth="1.200"><rect x="0.500" y="0.500" width="17" height="16" /><path d="M6 0v9h6V0M0 12h18" /></svg>
      </div>
      <svg width="11" height="3" viewBox="0 0 11 3" className="ml-[8px]"><rect width="11" height="3" fill="#666" /></svg>
      <div className="ml-[8px] w-[126px] h-[4px] rounded-full bg-[#9a9a9a] flex items-center">
        <div className="ml-[55px] w-[20px] h-[20px] rounded-full bg-white shadow-[0_0_2px_#999999]" />
      </div>
      <svg width="11" height="11" viewBox="0 0 11 11" className="ml-[8px]"><path d="M5.500 0v11M0 5.500h11" stroke="#666" strokeWidth="2.200" /></svg>
      <span className="ml-[24px] mr-[31px] text-[15px] text-[#666]">120%</span>
    </div>
  </div>
);

export default function App() {
  return (
    <div className="w-[1800px] h-[1083px] overflow-hidden flex flex-col bg-[#eeeeee] font-['Roboto',sans-serif]">
      <TopBar />
      <Ribbon />
      <FormulaBar />
      <div className="flex-1 min-h-0 flex">
        <div className="w-[1424px] shrink-0 flex flex-col">
          <div className="relative flex-1 min-h-0 overflow-hidden bg-white">
            <Sheet />
            <Chart />
          </div>
          <TabBar />
        </div>
        <Panel />
      </div>
      <StatusBar />
    </div>
  );
}
